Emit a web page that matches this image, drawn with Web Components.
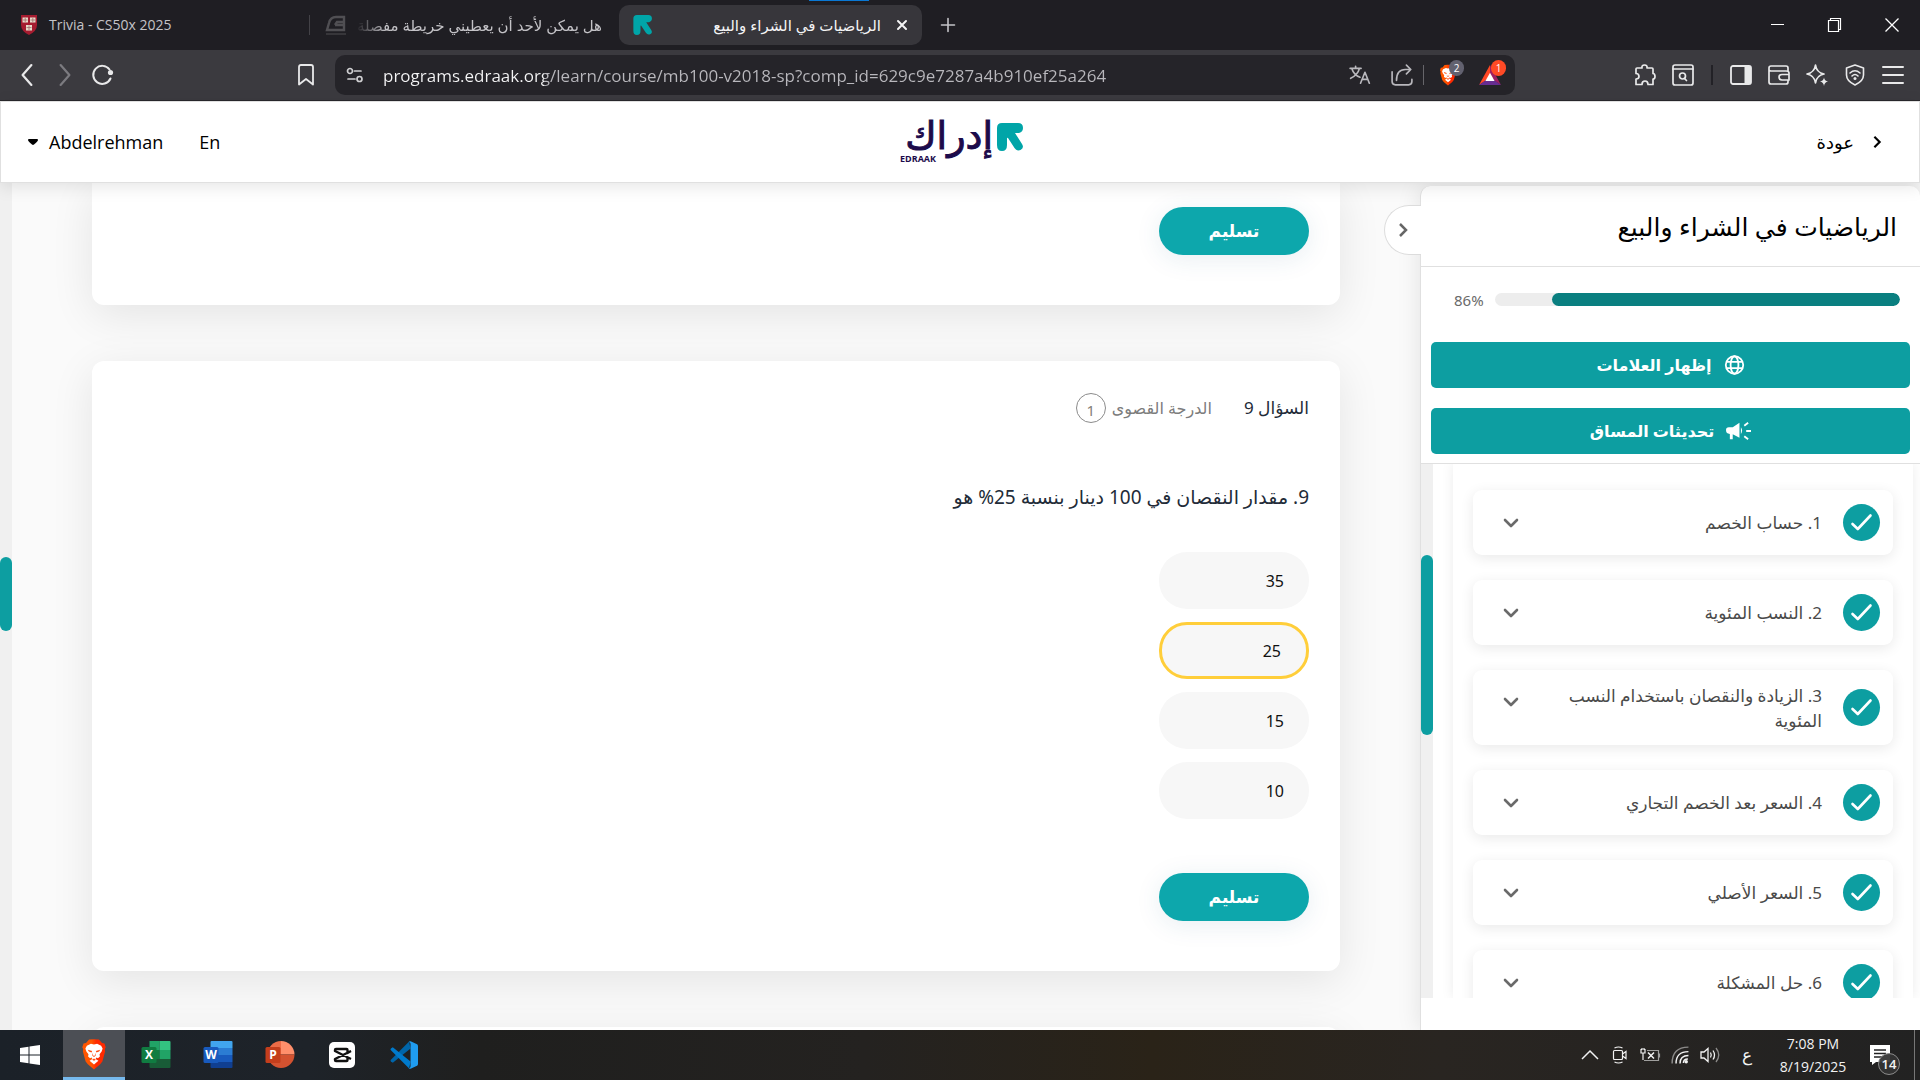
<!DOCTYPE html>
<html lang="ar">
<head>
<meta charset="utf-8">
<title>الرياضيات في الشراء والبيع</title>
<style>
  html, body { margin: 0; height: 100%; }
  body { font-family: "Noto Sans", "DejaVu Sans", sans-serif; overflow: hidden; }
</style>
</head>
<body>
<desktop-screen></desktop-screen>
<script>
const define = (name, html, setup) => {
  const tpl = document.createElement('template');
  tpl.innerHTML = html;
  customElements.define(name, class extends HTMLElement {
    constructor() {
      super();
      this.attachShadow({ mode: 'open' }).append(tpl.content.cloneNode(true));
    }
    connectedCallback() { if (setup) setup(this, this.shadowRoot); }
  });
};
const BASE = `:host,*{box-sizing:border-box} button{font:inherit;color:inherit;background:none;border:0;padding:0;margin:0;cursor:pointer} a{color:inherit;text-decoration:none} h1,h2,p{margin:0;font-weight:400}`;

const LION = `<path d="M12 1 16 1.200 18.500 4 20.500 4.500 21.500 7.500 20.800 9 21 11 18.800 19 17 21.300 12 25.500 7 21.300 5.200 19 3 11 3.200 9 2.500 7.500 3.500 4.500 5.500 4 8 1.200Z" fill="url(#lg)"/><defs><linearGradient id="lg"><stop stop-color="#ff5500"/><stop offset=".4" stop-color="#ff5500"/><stop offset=".6" stop-color="#ff2a00"/><stop offset="1" stop-color="#ff2a00"/></linearGradient></defs><path d="M12 5.200 14.500 4.700 17.800 6.200 19 8.500 18.200 11 16.500 13.300 16.800 15 15.200 16.400 14 15.800 13.300 17 15.600 18.500 12 21.600 8.400 18.500 10.700 17 10 15.800 8.800 16.400 7.200 15 7.500 13.300 5.800 11 5 8.500 6.200 6.200 9.500 4.700Z" fill="#fff"/><path d="M7 9.500 10.500 10.600 10 11.800 7.800 11ZM17 9.500 13.500 10.600 14 11.800 16.200 11ZM10.700 12v2.500l1.300 1 1.300-1V12l-.7 2.400h-1.200ZM10.500 17.600 12 16.600l1.500 1-1.500.9Z" fill="#ff4a10"/>`;
const EDR = `<path d="M5 0H21Q26 0 26 5 26 9 22 10H18L25 21Q27.500 25 23.500 27 20 28.500 17.500 25L11 15Q10 14 10 16V22Q10 28 5 28 0 28 0 22V5Q0 0 5 0Z" fill="#00a5a8"/>`;
const S = 'fill="none" stroke="currentColor" stroke-linecap="round" stroke-linejoin="round"';
const ICONS = {
  crest: ['0 0 16 20', `<path d="M0 0H16V10Q16 16 8 20 0 16 0 10Z" fill="#a51c30"/><path d="M1.500 2.500H7V7.500H1.500ZM9 2.500h5.500v5H9ZM5 10h6v5.500H5Z" fill="#e8dccb"/><path d="M4.200 3v4M11.800 3v4M8 10.500v4.500M2 5h4.500M9.500 5H14M5.500 12.600h5" stroke="#9c6a68" stroke-width=".8"/>`],
  cap: ['0 0 20 20', `<path d="M1 15 3 8Q4.500 2 10 2H18V15ZM9 10 11 7h7M9 10h9" fill="none" stroke="#565559" stroke-width="2.400"/><path d="M0 19h20" stroke="#3a393d" stroke-width="2"/>`],
  edraak: ['0 0 27 28', EDR],
  close: ['0 0 12 12', `<path d="M2 2 10 10M10 2 2 10" ${S} stroke-width="2"/>`],
  plus: ['0 0 14 14', `<path d="M7 .5V13.500M.5 7H13.500" ${S} stroke-width="1.600"/>`],
  min: ['0 0 14 14', `<path d="M0 6.500H13" stroke="currentColor"/>`],
  restore: ['0 0 14 14', `<path d="M.5 2.500H10.500V13.500H.5ZM2.500 2.500V.5H12.500V11.500H10.500" fill="none" stroke="currentColor" stroke-width="1.200"/>`],
  x: ['0 0 14 14', `<path d="M.5.5 13.500 13.500M13.500.5.5 13.500" stroke="currentColor" stroke-width="1.300"/>`],
  back: ['0 0 20 20', `<path d="M14 1 6 10 14 19" ${S} stroke-width="2"/>`],
  fwd: ['0 0 20 20', `<path d="M6 1 14 10 6 19" ${S} stroke-width="2"/>`],
  reload: ['0 0 22 20', `<path d="M18.500 13.500A9 9 0 1 1 17.500 4.500" ${S} stroke-width="2"/><circle cx="18.500" cy="7.500" r="2.600" fill="currentColor"/>`],
  bookmark: ['0 0 16 22', `<path d="M1 3Q1 1 3 1H13Q15 1 15 3V20.500L8 15 1 20.500Z" ${S} stroke-width="1.800"/>`],
  tune: ['0 0 18 16', `<g ${S} stroke-width="1.700"><circle cx="4" cy="4" r="2.500"/><path d="M8.500 4H15M2 12H9"/><circle cx="13.500" cy="12" r="2.500"/></g>`],
  translate: ['0 0 20 18', `<g ${S} stroke-width="1.500"><path d="M1 3H11M6 1V3M2.500 3Q4.500 9 10 11M9.500 3Q8 9 1.500 12M10.500 16.500 14.500 6.500 18.500 16.500M12 13H17"/></g>`],
  share: ['0 0 20 20', `<g ${S} stroke-width="1.500"><path d="M1 7V16Q1 19 4 19H16Q19 19 19 16V14M5 15Q5 5 13 5H18M14 1 18 5 14 9"/></g>`],
  lion: ['1 0 22 26', LION],
  bat: ['0 0 24 22', `<path d="M12 0 0 22 12 14Z" fill="#ff4724"/><path d="M12 0 24 22 12 14Z" fill="#9e1f63"/><path d="M0 22H24L12 13.500Z" fill="#662d91"/><path d="M12 8.500 17 17.500H7Z" fill="#fff"/>`],
  puzzle: ['0 0 22 22', `<path d="M3 4H8Q7.500 1 10.500 1 13.500 1 13 4H18Q19 4 19 5V9.500Q21 9.500 21 12.500 21 15 19 15V20.500H14Q14 17 11 17 8 17 8 20.500H2V15Q5 15 5 12.500 5 9.500 2 9.500V5Q2 4 3 4Z" ${S} stroke-width="1.700"/>`],
  tabsearch: ['0 0 22 22', `<g ${S} stroke-width="1.700"><rect x="1" y="1" width="20" height="20" rx="2"/><path d="M1 5H21"/><circle cx="10.500" cy="12" r="3"/><path d="M12.500 14.500 14.500 16.500"/></g>`],
  sidebar: ['0 0 22 22', `<rect x="1" y="2" width="20" height="18" rx="2" ${S} stroke-width="1.800"/><path d="M14.500 2H20Q21 2 21 3V19Q21 20 20 20H14.500Z" fill="currentColor"/>`],
  wallet: ['0 0 22 22', `<g ${S} stroke-width="1.700"><path d="M20 7V4Q20 2 18 2H3Q1 2 1 4V18Q1 20 3 20H18Q20 20 20 18V16M1 5.500Q1 7 3 7H18Q21 7 21 9V16H14Q11 16 11 13 11 10.500 14 10.500H21"/></g>`],
  spark: ['0 0 22 22', `<path d="M9.500 1Q10.500 8.500 18 10 10.500 11.500 9.500 19 8.500 11.500 1 10 8.500 8.500 9.500 1Z" ${S} stroke-width="1.700"/><path d="M18 13.500Q18.500 17 22 17.500 18.500 18 18 22 17.500 18 14 17.500 17.500 17 18 13.500Z" fill="currentColor"/>`],
  vpn: ['0 0 20 22', `<g ${S} stroke-width="1.600"><path d="M10 1 18.500 4V11Q18.500 17 10 21 1.500 17 1.500 11V4Z"/><path d="M5 9Q10 4.500 15 9M7 12Q10 9 13 12"/></g><circle cx="10" cy="14.500" r="1.500" fill="currentColor"/>`],
  menu: ['0 0 22 20', `<path d="M1 2H21M1 10H21M1 18H21" ${S} stroke-width="2"/>`],
  caret: ['0 0 10 6', `<path d="M0 1Q0 0 1 0H9Q10 0 10 1 10 2 6 5.500 5 6.300 4 5.500 0 2 0 1Z" fill="currentColor"/>`],
  right: ['0 0 10 16', `<path d="M2 2 8 8 2 14" ${S} stroke-width="2.500" style="stroke-linecap:butt;stroke-linejoin:miter"/>`],
  down: ['0 0 16 10', `<path d="M2 2 8 8 14 2" ${S} stroke-width="2.600"/>`],
  check: ['0 0 37 37', `<circle cx="18.500" cy="18.500" r="18.500" fill="#0d9ea1"/><path d="M9.500 20 14.800 25 27.500 11.500" fill="none" stroke="#fff" stroke-width="2.600" stroke-linecap="round" stroke-linejoin="round"/>`],
  globe: ['0 0 22 22', `<g fill="none" stroke="currentColor" stroke-width="2"><circle cx="11" cy="11" r="9.600"/><ellipse cx="11" cy="11" rx="4.300" ry="9.600"/><path d="M2 7.500H20M2 14.500H20"/></g>`],
  horn: ['0 0 26 20', `<path d="M0 9Q0 6 3 6H7L14 1.500V17L7 13.500V18.500H4V13Q0 13 0 9Z" fill="currentColor"/><path d="M15.500 6Q18 9.500 15.500 13Z" fill="currentColor"/><path d="M19 4.500 23 1.500M21 10H26M19 15.500 23 18.500" fill="none" stroke="currentColor" stroke-width="2"/>`],
  win: ['0 0 20 20', `<path d="M0 3 8.500 1.800V9.500H0ZM9.500 1.600 20 0V9.500H9.500ZM0 10.500H8.500V18.200L0 17ZM9.500 10.500H20V20L9.500 18.400Z" fill="#fff"/>`],
  excel: ['0 0 29 28', `<path d="M8 0H18V9H8Z" fill="#21a366"/><path d="M18 0H28Q29 0 29 1V9H18Z" fill="#33c481"/><path d="M8 9H18V18H8Z" fill="#107c41"/><path d="M18 9H29V18H18Z" fill="#21a366"/><path d="M8 18H29V26Q29 27 28 27H9Q8 27 8 26Z" fill="#185c37"/><rect y="6" width="15" height="16" rx="1.500" fill="#107c41"/><text x="7.500" y="18.200" text-anchor="middle" font-size="12" font-weight="700" fill="#fff">X</text>`],
  word: ['0 0 29 28', `<path d="M7 1Q7 0 8 0H28Q29 0 29 1V7H7Z" fill="#41a5ee"/><path d="M7 7H29V14H7Z" fill="#2b7cd3"/><path d="M7 14H29V21H7Z" fill="#185abd"/><path d="M7 21H29V26Q29 27 28 27H8Q7 27 7 26Z" fill="#103f91"/><rect y="6" width="15" height="16" rx="1.500" fill="#185abd"/><text x="7.500" y="18.200" text-anchor="middle" font-size="12" font-weight="700" fill="#fff">W</text>`],
  ppt: ['0 0 29 28', `<path d="M15.500 0A13.500 13.500 0 0 0 2 13.500H15.500Z" fill="#ed6c47"/><path d="M15.500 0A13.500 13.500 0 0 1 29 13.500H15.500Z" fill="#ff8f6b"/><path d="M2 13.500A13.500 13.500 0 0 0 29 13.500Z" fill="#d35230"/><rect y="6" width="15" height="16" rx="1.500" fill="#c43e1c"/><text x="7.500" y="18.200" text-anchor="middle" font-size="12" font-weight="700" fill="#fff">P</text>`],
  capcut: ['0 0 28 28', `<rect x="1" y="1" width="26" height="26" rx="5" fill="#fff"/><path d="M23 10 19.500 12V9Q19.500 8 18.500 8H8Q7 8 7 9V10L23 18M23 10 7 18V19Q7 20 8 20H18.500Q19.500 20 19.500 19V16" fill="none" stroke="#111" stroke-width="2.400" stroke-linejoin="round"/>`],
  vscode: ['0 0 30 30', `<path d="M3 23.300 1 22Q0 21 1 20L20.500.5 22 8Z" fill="#0065a9"/><path d="M3 6.700 1 8Q0 9 1 10L20.500 29.500 22 22Z" fill="#007acc"/><path d="M22 .3 29 3.500Q30 4 30 5.500V24.500Q30 26 29 26.500L22 29.700Q20.500 30 20 29 22 29 22 27V3Q22 1 20 1 21 0 22 .3Z" fill="#1f9cf0"/>`],
  up: ['0 0 16 10', `<path d="M0 9 8 1 16 9" fill="none" stroke="currentColor" stroke-width="1.500"/>`],
  cam: ['0 0 15 18', `<g fill="none" stroke="currentColor" stroke-width="1.200"><rect x="1" y="4.500" width="9" height="9" rx="1"/><path d="M10 8 13.500 5.500V12.500L10 10M2 2Q6 0 10 2M2 16Q6 18 10 16"/></g>`],
  battery: ['0 0 20 14', `<g fill="none" stroke="currentColor" stroke-width="1.200"><path d="M1 1V5H5V1M3 5V12M2 0V2M4 0V2"/><path d="M7 2.500H18.500V12.500H4M19.500 5.500V9.500" opacity=".6"/><path d="M8 4.500 14 10.500M14 4.500 8 10.500" stroke-width="1.500"/></g>`],
  wifi: ['0 0 16 16', `<g fill="none" stroke="currentColor" stroke-width="1.300"><path d="M1 15.500Q1 1 15.500 1" opacity=".5"/><path d="M4.500 15.500Q4.500 5 15.500 5M8 15.500Q8 8.500 15.500 8.500M11 15Q11 11.500 15 11.500"/></g><circle cx="13.500" cy="14" r="1.600" fill="currentColor"/>`],
  vol: ['0 0 20 18', `<g fill="none" stroke="currentColor" stroke-width="1.300"><path d="M1 6H4L8 2.500V15.500L4 12H1ZM10.500 6.500Q12 9 10.500 11.500M13 4.500Q16 9 13 13.500"/><path d="M16 2Q21.500 9 16 16" opacity=".5"/></g>`],
  note: ['0 0 20 20', `<path d="M0 0H20V17H6L2 20V17H0Z" fill="#fff"/><path d="M4 5H16M4 8.500H16M4 12H12" stroke="#222" stroke-width="1.300"/>`]
};
define('ui-icon', `<style>:host{display:inline-flex;flex:none;width:20px;height:20px}svg{width:100%;height:100%;overflow:visible;font-family:"Open Sans",sans-serif}</style>`,
  (el, root) => {
    const [vb, body] = ICONS[el.getAttribute('name')];
    root.innerHTML += `<svg viewBox="${vb}" aria-hidden="true">${body}</svg>`;
  });

define('browser-tabs', `<style>${BASE}
:host{display:flex;height:50px;background:#1f1e23;color:#c4c3c7;font:15px/20px "Noto Sans","DejaVu Sans",sans-serif;align-items:center;background-image:linear-gradient(#0a78d4,#0a78d4);background-size:60px 1px;background-position:809px 0;background-repeat:no-repeat}
button{display:flex;align-items:center}
.tab{height:40px;border-radius:10px;gap:12px;flex:none;text-align:left}
.t1{width:309px;padding-left:21px;font-family:"Open Sans",sans-serif;font-size:14px}
.t1 ui-icon{width:16px}
.sep{width:1px;height:20px;background:#434247}
.t2{width:309px;padding:0 17px 0 16px;gap:10px}
.t3{width:303px;padding:0 14px;background:#37363b;color:#f4f4f5;gap:15px}
.t2 ui-icon{opacity:.9}
.name{flex:1;overflow:hidden;white-space:nowrap;direction:rtl;text-align:start}
.t2 .name{-webkit-mask:linear-gradient(90deg,transparent,#000 30px)}
.t3 .close{width:12px;height:12px}
.new{width:52px;justify-content:center}.new ui-icon{width:14px;height:14px}
.wins{margin-left:auto;display:flex;color:#fff}.wins button{width:57px;height:50px;justify-content:center}.wins ui-icon{width:14px;height:14px}
</style>
<button class="tab t1"><ui-icon name="crest"></ui-icon><span>Trivia - CS50x 2025</span></button><span class="sep"></span>
<button class="tab t2"><ui-icon name="cap"></ui-icon><span class="name">هل يمكن لأحد أن يعطيني خريطة مفصلة</span></button>
<button class="tab t3"><ui-icon name="edraak"></ui-icon><span class="name">الرياضيات في الشراء والبيع</span><ui-icon class="close" name="close"></ui-icon></button>
<button class="new" aria-label="+"><ui-icon name="plus"></ui-icon></button>
<div class="wins"><button><ui-icon name="min"></ui-icon></button><button><ui-icon name="restore"></ui-icon></button><button><ui-icon name="x"></ui-icon></button></div>`);

define('browser-toolbar', `<style>${BASE}
:host{display:flex;height:51px;padding:5px 8px 5px 8px;background:#3b3a3f;border-bottom:1px solid #29282c;align-items:center;color:#e9e9ea}
button{display:flex;align-items:center;justify-content:center;width:38px;height:40px;position:relative}
ui-icon{width:22px;height:22px}
.off{color:#7c7b80}
.mark{margin-left:auto}
.nav{display:flex;width:317px;margin-right:10px}
.bar{flex:1;display:flex;align-items:center;height:40px;border-radius:10px;background:#252429;padding:0 4px 0 1px;color:#b9b8bd}
.bar button{width:42px}
.bar .site{width:38px}.site ui-icon{width:18px;color:#d0d0d2}
input{flex:1;min-width:0;border:0;outline:0;padding:0 0 0 9px;height:32px;font:17px "Open Sans",sans-serif;color:#c8c7cb;-webkit-text-fill-color:transparent;background:linear-gradient(90deg,#f5f5f6 170px,#b9b8bd 170px);-webkit-background-clip:text;background-clip:text}
.line{width:1px;height:20px;background:#66656a;margin-right:3px}
.badge{position:absolute;left:22px;top:5px;min-width:15px;height:16px;border-radius:8px;background:#62616f;color:#fff;font:10px/16px "Open Sans",sans-serif;text-align:center}
.badge.r{background:#ff4a26}
.ext{display:flex;align-items:center;margin-left:111px}
.ext .line{margin:0 9px;background:#222126;width:2px}
</style>
<div class="nav"><button aria-label="Back"><ui-icon name="back"></ui-icon></button><button class="off" aria-label="Forward"><ui-icon name="fwd"></ui-icon></button><button aria-label="Reload"><ui-icon name="reload"></ui-icon></button><button class="mark" aria-label="Bookmark"><ui-icon name="bookmark"></ui-icon></button></div>
<div class="bar"><button class="site" aria-label="Site"><ui-icon name="tune"></ui-icon></button><input type="text" aria-label="URL" value="programs.edraak.org/learn/course/mb100-v2018-sp?comp_id=629c9e7287a4b910ef25a264"><button><ui-icon name="translate"></ui-icon></button><button><ui-icon name="share"></ui-icon></button><span class="line"></span><button><ui-icon name="lion"></ui-icon><span class="badge">2</span></button><button><ui-icon name="bat"></ui-icon><span class="badge r">1</span></button></div>
<div class="ext"><button><ui-icon name="puzzle"></ui-icon></button><button><ui-icon name="tabsearch"></ui-icon></button><span class="line"></span><button><ui-icon name="sidebar"></ui-icon></button><button><ui-icon name="wallet"></ui-icon></button><button><ui-icon name="spark"></ui-icon></button><button><ui-icon name="vpn"></ui-icon></button><button><ui-icon name="menu"></ui-icon></button></div>`);

define('edraak-logo', `<style>:host{display:block;width:126px;height:40px}svg{display:block;width:100%;height:100%;overflow:visible}</style>
<svg viewBox="0 0 126 40" role="img"><g transform="translate(100 1)">${EDR}</g><text x="96" y="27" direction="rtl" font-family="DejaVu Sans" font-weight="400" font-size="38" stroke="#1c0b4b" fill="#1c0b4b">إدراك</text><text x="3" y="40" direction="ltr" font-family="Open Sans" font-weight="700" font-size="9" fill="#1c0b4b">EDRAAK</text></svg>`);

define('course-header', `<style>${BASE}
:host{display:grid;grid-template-columns:1fr auto 1fr;align-items:center;height:82px;padding:0 27px;background:#fff;border:1px solid #e0e0e0;box-shadow:0 4px 16px rgba(0,0,0,.1);position:relative;z-index:2;direction:rtl;color:#000}
a,button{display:flex;align-items:center;font-size:18px;line-height:24px}
a{gap:18px;justify-self:start;padding:0 10px}a ui-icon{width:10px;height:14px}
.user{display:flex;justify-self:end;gap:36px;direction:ltr;font-family:"Open Sans",sans-serif}
.user button{gap:11px}.user ui-icon{width:10px;height:6px}
</style>
<a href="#"><ui-icon name="right"></ui-icon><span>عودة</span></a><edraak-logo></edraak-logo>
<div class="user"><button><ui-icon name="caret"></ui-icon>Abdelrehman</button><button>En</button></div>`);

define('scroll-track', `<style>:host{display:flex;flex-direction:column;flex:none;width:12px;background:#f0f0f0}
:host::before,:host::after{content:"";flex:var(--before) 0 0}:host::after{flex-grow:var(--after)}
div{height:var(--thumb);border-radius:6px;background:#0d9ea1}</style><div></div>`);

define('submit-button', `<style>${BASE}:host{display:block}button{display:block;width:150px;height:48px;border-radius:24px;background:#0da7ac;color:#fff;font-weight:700;font-size:17px;line-height:24px;box-shadow:0 4px 26px rgba(28,90,130,.1)}</style><button><slot></slot></button>`);

define('answer-option', `<style>${BASE}:host{display:block}
label{display:flex;align-items:center;width:150px;height:57px;border-radius:28px;background:#f7f7f7;padding:0 25px;color:#111;font-size:16px;line-height:24px;cursor:pointer}
input{appearance:none;width:0;height:0;margin:0}
label:has(input:checked){border:3px solid #ffce3a}</style>
<label><input type="radio" name="answer"><slot></slot></label>`,
  (el, root) => { root.querySelector('input').checked = el.hasAttribute('checked'); });

define('question-card', `<style>${BASE}
:host{display:block;background:#fff;border-radius:12px;box-shadow:0 10px 44px rgba(0,0,0,.09);padding:32px 31px 50px}
:host([part-shown=end]){border-radius:0 0 12px 12px;padding-top:24px}
header{display:flex;align-items:center;height:30px}
h2{font-size:17px;line-height:24px;color:#222b38}
.max{margin-inline-start:32px;font-size:16px;line-height:24px;color:#7c7c7c}
.score{margin-inline-start:6px;width:30px;height:30px;border:1px solid #8b8b8b;border-radius:50%;display:flex;justify-content:center;align-items:center;padding-top:4px;font-size:15px;line-height:24px;color:#857f78}
p{margin:62px 0 43px;font-size:19px;line-height:24px;color:#222b38}
.answers{display:grid;gap:13px;margin-bottom:54px;justify-content:start}
:host([part-shown]) :is(header,p,.answers),:host([part-shown=start]) submit-button{display:none}
</style>
<header><h2><slot name="title"></slot></h2><span class="max"><slot name="max"></slot></span><span class="score"><slot name="score"></slot></span></header>
<p><slot name="text"></slot></p><div class="answers"><slot></slot></div><submit-button>تسليم</submit-button>`);

define('lesson-item', `<style>${BASE}:host{display:block}
button{width:100%;min-height:65px;display:flex;align-items:center;background:#fff;border-radius:9px;box-shadow:0 3px 14px rgba(0,0,0,.09);padding:12px 13px;text-align:start;color:#4a4a4a;font-size:17px;line-height:25px}
:host([tall]) button{height:75px}
.txt{flex:1;margin-inline:21px 20px}
.c{width:37px;height:37px}.d{width:16px;height:10px;color:#6a6a6a;margin-left:17px}
:host([tall]) .d{align-self:flex-start;margin-top:15px}
</style><button><ui-icon class="c" name="check"></ui-icon><span class="txt"><slot></slot></span><ui-icon class="d" name="down"></ui-icon></button>`);

define('course-sidebar', `<style>${BASE}
:host{display:flex;flex-direction:column;width:500px;flex:none;margin-top:3px;background:#fff;border:1px solid #e0e0e0;border-width:0 0 0 1px;border-radius:10px 10px 0 0;box-shadow:0 0 24px rgba(0,0,0,.1);position:relative}
.fold{position:absolute;left:-37px;top:19px;width:37px;height:50px;border:1px solid #dcdcdc;border-right:0;border-radius:25px 0 0 25px;background:#fff;display:flex;align-items:center;justify-content:center;color:#666}
.fold ui-icon{width:10px;height:16px}
h1{height:81px;padding:24px 23px 0;font-size:25px;line-height:32px;border-bottom:1px solid #e0e0e0;white-space:nowrap}
.prog{display:flex;align-items:center;gap:9px;padding:0 20px 0 33px;height:65px;color:#6a6a6a;font-size:15px;line-height:20px;margin-bottom:10px}
.prog span{width:32px;text-align:left}
.track{flex:1;height:13px;border-radius:7px;background:#ededed;overflow:hidden}
.track div{height:100%;width:86%;border-radius:7px;background:#0a7f80}
.acts{display:grid;gap:20px;padding:0 10px 9px;border-bottom:1px solid #e0e0e0}
.acts button{height:46px;border-radius:5px;background:#0d9ea1;color:#fff;font-size:16px;line-height:24px;font-weight:700;display:flex;gap:12px;align-items:center;justify-content:center}
.globe{width:21px}.horn{width:25px;height:20px}
.scroll{display:flex;flex:1;min-height:0;overflow:hidden;margin-bottom:32px}
.panel{flex:1;margin:0 7px 0 20px;padding:26px 20px 0;box-shadow:0 0 12px rgba(0,0,0,.08);display:flex;flex-direction:column;gap:25px}
lesson-item{flex:none}
</style>
<button class="fold" aria-label="طي"><ui-icon name="right"></ui-icon></button>
<h1>الرياضيات في الشراء والبيع</h1>
<div class="prog"><div class="track"><div></div></div><span dir="ltr">86%</span></div>
<div class="acts"><button><ui-icon class="globe" name="globe"></ui-icon>إظهار العلامات</button><button><ui-icon class="horn" name="horn"></ui-icon>تحديثات المساق</button></div>
<div class="scroll"><div class="panel">
<lesson-item>1. حساب الخصم</lesson-item><lesson-item>2. النسب المئوية</lesson-item><lesson-item tall>3. الزيادة والنقصان باستخدام النسب المئوية</lesson-item><lesson-item>4. السعر بعد الخصم التجاري</lesson-item><lesson-item>5. السعر الأصلي</lesson-item><lesson-item>6. حل المشكلة</lesson-item>
</div><scroll-track style="--before:91;--after:263;--thumb:180px"></scroll-track></div>`);

define('course-page', `<style>${BASE}
:host{display:flex;min-height:0;overflow:hidden;background:#fafafa;direction:rtl}
main{flex:1;min-width:0;padding:0 80px;display:flex;flex-direction:column;gap:56px}
question-card{flex:none}
</style>
<course-sidebar></course-sidebar>
<main><question-card part-shown="end"></question-card>
<question-card><span slot="title">السؤال 9</span><span slot="max">الدرجة القصوى</span><span slot="score">1</span><span slot="text">9. مقدار النقصان في 100 دينار بنسبة 25% هو</span>
<answer-option>35</answer-option><answer-option checked>25</answer-option><answer-option>15</answer-option><answer-option>10</answer-option></question-card>
<question-card part-shown="start"></question-card></main>
<scroll-track style="--before:374;--after:399;--thumb:74px"></scroll-track>`);

define('task-bar', `<style>${BASE}
:host{display:flex;height:50px;background:linear-gradient(90deg,#1b2128,#1e2329 16%,#1f1f1e 25%,#242220 45%,#2a2318 60%,#292521 75%,#222 100%);color:#f2f2f2;font-family:"Open Sans",sans-serif}
button{display:flex;align-items:center;justify-content:center;width:62px;flex:none}
button ui-icon{width:30px;height:28px}
.start ui-icon{width:20px;height:20px}.start{width:63px;padding-right:4px}
.on{background:#4c4f55;border-bottom:3px solid #76b9ed}
.on ui-icon{width:28px;height:32px}
.tray{margin-left:auto;display:flex;align-items:center}
.tray ui-icon{width:20px;height:18px}
.tray .i{width:30px}.tray .i:first-child ui-icon{width:16px}
.lang{width:44px;font:17px/24px "Noto Sans","DejaVu Sans",sans-serif}
.clock{width:88px;flex-direction:column;font-size:14px;line-height:23px}
.note{position:relative;width:57px;height:50px;padding-right:12px}.note ui-icon{height:20px}
.count{position:absolute;left:21px;top:23px;width:22px;height:22px;border:1px solid #8b8b8b;border-radius:50%;background:#333e;font-size:13px;font-weight:600;line-height:20px;text-align:center}
.edge{width:6px;height:50px;border-left:1px solid #777}
</style>
<button class="start" aria-label="Start"><ui-icon name="win"></ui-icon></button><button class="on"><ui-icon name="lion"></ui-icon></button><button><ui-icon name="excel"></ui-icon></button><button><ui-icon name="word"></ui-icon></button><button><ui-icon name="ppt"></ui-icon></button><button><ui-icon name="capcut"></ui-icon></button><button><ui-icon name="vscode"></ui-icon></button>
<div class="tray"><button class="i"><ui-icon name="up"></ui-icon></button><button class="i"><ui-icon name="cam"></ui-icon></button><button class="i"><ui-icon name="battery"></ui-icon></button><button class="i"><ui-icon name="wifi"></ui-icon></button><button class="i"><ui-icon name="vol"></ui-icon></button><button class="lang">ع</button><button class="clock"><span>7:08 PM</span><span>8/19/2025</span></button><button class="note"><ui-icon name="note"></ui-icon><span class="count">14</span></button><span class="edge"></span></div>`);

define('desktop-screen', `<style>:host{display:flex;flex-direction:column;height:100vh;overflow:hidden}browser-tabs,browser-toolbar,course-header,task-bar{flex:none}course-page{flex:1}</style>
<browser-tabs></browser-tabs><browser-toolbar></browser-toolbar><course-header></course-header><course-page></course-page><task-bar></task-bar>`);
</script>
</body>
</html>
